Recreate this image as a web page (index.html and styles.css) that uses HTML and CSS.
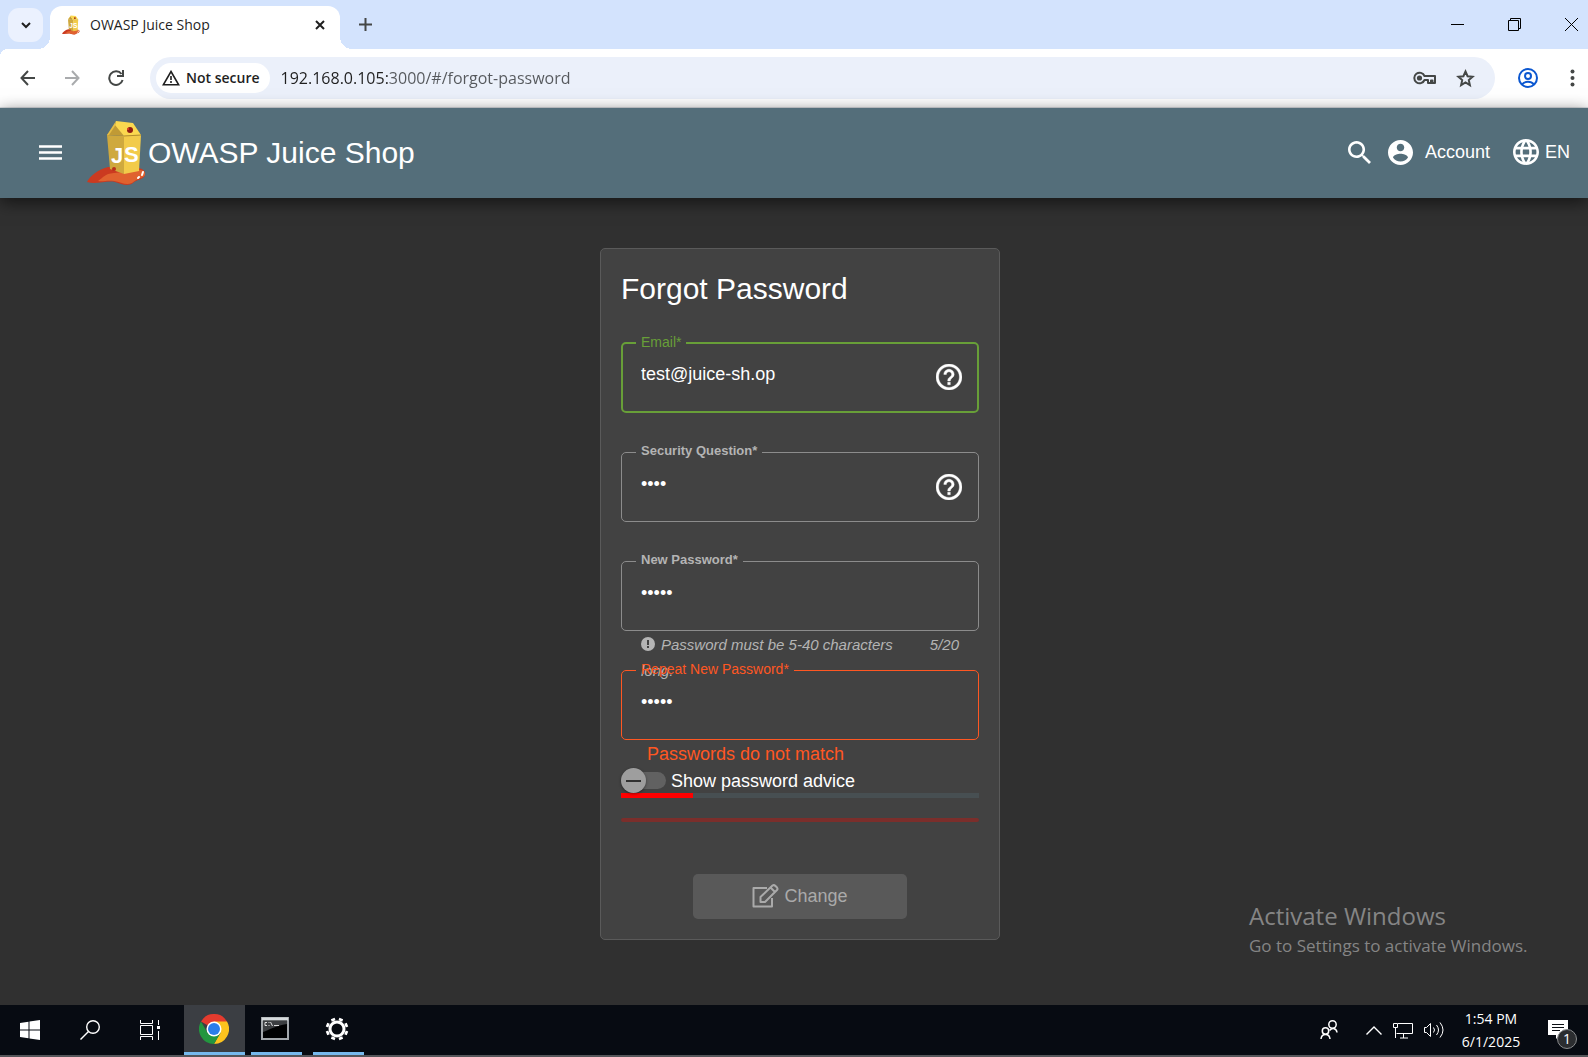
FILE: index.html
```html
<!DOCTYPE html>
<html lang="en">
<head>
<meta charset="utf-8">
<title>OWASP Juice Shop</title>
<link rel="stylesheet" href="styles.css">
</head>
<body>
<svg class="defs" width="0" height="0" aria-hidden="true">
  <symbol id="juice" viewBox="0 0 60 66">
    <path d="M0 62C3 56 10 50 21 47L50 48C57 48 60 53 57 57C54 60 49 60 46 63C41 67 34 64 28 62C20 60 9 65 0 62Z" fill="#cb3a20"/>
    <path d="M11 61C17 57 17 54 27 53L52 50C58 49 60 55 56 57C51 59 49 60 45 63C39 66 34 62 27 61C20 60 16 62 11 61Z" fill="#e0622f"/>
    <path d="M20 15L37 16L37 54L23 49Z" fill="#cfa93e"/>
    <path d="M37 16L54 15L52 51L37 54Z" fill="#f2cb4a"/>
    <path d="M20 15L29 4L37 16Z" fill="#c09a35"/>
    <path d="M29 1L46 3L54 15L37 16L28 5Z" fill="#fbd84f"/>
    <path d="M20 15L29 1L28 6L22 15Z" fill="#e5bd45"/>
    <path d="M37 16L54 15" stroke="#b58f2c" fill="none"/>
    <circle cx="43" cy="10" r="3" fill="#8f1d12"/><circle cx="41" cy="9" r="1" fill="#ef4428"/>
    <text class="logo-text" x="24" y="43">J</text>
    <text class="logo-text" x="37" y="42">S</text>
    <circle cx="27" cy="49" r="2" fill="#b9301c"/>
    <path d="M56 52L55 55M52 57L51 58" stroke="#fff" stroke-width="2" stroke-linecap="round"/>
  </symbol>
  <symbol id="help" viewBox="2 2 20 20">
    <path fill="currentColor" stroke="currentColor" stroke-width=".3" d="M11 18h2v-2h-2v2zm1-16C6.480 2 2 6.480 2 12s4.480 10 10 10 10-4.480 10-10S17.520 2 12 2zm0 18c-4.410 0-8-3.590-8-8s3.590-8 8-8 8 3.590 8 8-3.590 8-8 8zm0-14c-2.210 0-4 1.790-4 4h2c0-1.100.9-2 2-2s2 .9 2 2c0 2-3 1.750-3 5h2c0-2.250 3-2.500 3-5 0-2.210-1.790-4-4-4z"/>
  </symbol>
</svg>

<div class="tabstrip">
  <button class="tab-search" aria-label="Search tabs"><svg width="12" height="8" viewBox="0 0 12 8"><path d="M2 2l4 4 4-4" fill="none" stroke="#1f1f1f" stroke-width="2"/></svg></button>
  <div class="tab">
    <svg class="favicon" width="18" height="20"><use href="#juice"/></svg>
    <span class="tab-title">OWASP Juice Shop</span>
    <button class="icon-btn" aria-label="Close tab"><svg width="10" height="10" viewBox="0 0 10 10"><path d="M1 1l8 8M9 1l-8 8" stroke="#1f1f1f" stroke-width="2"/></svg></button>
  </div>
  <button class="icon-btn new-tab" aria-label="New tab"><svg width="13" height="13" viewBox="0 0 13 13"><path d="M6.500 0v13M0 6.500h13" stroke="#444746" stroke-width="2"/></svg></button>
  <div class="window-controls">
    <button class="icon-btn" aria-label="Minimize"><svg width="13" height="13" viewBox="0 0 13 13"><path d="M0 6.500h13" stroke="#000"/></svg></button>
    <button class="icon-btn" aria-label="Restore"><svg width="13" height="13" viewBox="0 0 13 13"><path d="M.5 2.500h10v10h-10zM2.500 2V.5h10v10H11" fill="none" stroke="#000"/></svg></button>
    <button class="icon-btn" aria-label="Close"><svg width="13" height="13" viewBox="0 0 13 13"><path d="M0 0l13 13M13 0L0 13" stroke="#000"/></svg></button>
  </div>
</div>

<div class="toolbar">
  <div class="nav">
    <button class="icon-btn" aria-label="Back"><svg width="16" height="16" viewBox="0 0 16 16"><path d="M15 8H2M8 1L1.500 8 8 15" fill="none" stroke="#444746" stroke-width="2"/></svg></button>
    <button class="icon-btn" aria-label="Forward"><svg width="16" height="16" viewBox="0 0 16 16"><path d="M1 8h13M8 1l6.500 7L8 15" fill="none" stroke="#a9abad" stroke-width="2"/></svg></button>
    <button class="icon-btn" aria-label="Reload"><svg width="16" height="16" viewBox="0 0 16 16"><path d="M13.500 4A6.800 6.800 0 1 0 14.600 10M15 0v6H9" fill="none" stroke="#444746" stroke-width="2"/></svg></button>
  </div>
  <div class="omnibox">
    <button class="chip"><svg width="18" height="16" viewBox="0 0 18 16"><path d="M9 1.500L16.700 14.800H1.300Z" fill="none" stroke="#1f1f1f" stroke-width="1.600"/><path d="M9 6v4M9 11v2" stroke="#1f1f1f" stroke-width="1.600"/></svg>Not secure</button>
    <input class="url" type="text" aria-label="Address" value="192.168.0.105:3000/#/forgot-password">
    <button class="icon-btn" aria-label="Passwords"><svg width="23" height="14" viewBox="0 0 23 14"><path d="M11.500 5A5.300 5.300 0 1 0 11.500 9H15v3h3V9.500h1.500V12H22V5Z" fill="none" stroke="#444746" stroke-width="2" stroke-linejoin="round"/><circle cx="6.500" cy="7" r="2.600" fill="#444746"/></svg></button>
    <button class="icon-btn" aria-label="Bookmark"><svg width="19" height="19" viewBox="0 0 19 19"><path d="M9.500 2.500l2.100 4.700 5 .5-3.800 3.400 1.100 5-4.400-2.600-4.400 2.600 1.100-5-3.800-3.400 5-.5z" fill="none" stroke="#444746" stroke-width="2"/></svg></button>
  </div>
  <button class="icon-btn profile" aria-label="Profile"><svg width="20" height="20" viewBox="0 0 20 20" fill="none" stroke="#0b57d0" stroke-width="2"><circle cx="10" cy="10" r="9"/><circle cx="10" cy="8" r="3"/><path d="M4 16.500c3-3.600 9-3.600 12 0"/></svg></button>
  <button class="icon-btn" aria-label="Menu"><svg width="5" height="18" viewBox="0 0 5 18" fill="#444746"><circle cx="2.500" cy="2.500" r="2"/><circle cx="2.500" cy="9" r="2"/><circle cx="2.500" cy="15.500" r="2"/></svg></button>
</div>

<header class="app-bar">
  <button class="icon-btn menu-btn" aria-label="Open sidenav"><svg width="24" height="15" viewBox="0 0 24 15"><path d="M0 1.500h23M0 7.500h23M0 13.500h23" stroke="#fff" stroke-width="2.600"/></svg></button>
  <a class="brand" href="#/"><svg width="60" height="66"><use href="#juice"/></svg><span>OWASP Juice Shop</span></a>
  <button class="icon-btn search-btn" aria-label="Search"><svg width="23" height="23" viewBox="3 3 17.500 17.500"><path fill="#fff" d="M15.500 14h-.79l-.28-.27C15.410 12.590 16 11.110 16 9.500 16 5.910 13.090 3 9.500 3S3 5.910 3 9.500 5.910 16 9.500 16c1.610 0 3.090-.59 4.230-1.570l.27.28v.79l5 4.990L20.490 19l-4.990-5zm-6 0C7.010 14 5 11.990 5 9.500S7.010 5 9.500 5 14 7.010 14 9.500 11.990 14 9.500 14z"/></svg></button>
  <button class="app-btn account"><svg width="25" height="25" viewBox="2 2 20 20"><path fill="#fff" d="M12 2C6.480 2 2 6.480 2 12s4.480 10 10 10 10-4.480 10-10S17.520 2 12 2zm0 3c1.660 0 3 1.340 3 3s-1.340 3-3 3-3-1.340-3-3 1.340-3 3-3zm0 14.200c-2.500 0-4.710-1.280-6-3.220.03-1.990 4-3.080 6-3.080 1.990 0 5.970 1.090 6 3.080-1.290 1.940-3.500 3.220-6 3.220z"/></svg>Account</button>
  <button class="app-btn lang"><svg width="26" height="26" viewBox="2 2 20 20"><path fill="#fff" d="M11.990 2C6.470 2 2 6.480 2 12s4.470 10 9.990 10C17.520 22 22 17.520 22 12S17.520 2 11.990 2zm6.930 6h-2.950c-.32-1.250-.78-2.450-1.380-3.560 1.840.63 3.370 1.910 4.330 3.560zM12 4.040c.83 1.200 1.480 2.530 1.910 3.960h-3.820c.43-1.430 1.080-2.760 1.910-3.960zM4.260 14C4.100 13.360 4 12.690 4 12s.1-1.360.26-2h3.380c-.08.66-.14 1.320-.14 2s.06 1.340.14 2H4.260zm.82 2h2.950c.32 1.250.78 2.450 1.380 3.560-1.840-.63-3.370-1.900-4.330-3.560zm2.950-8H5.080c.96-1.660 2.490-2.930 4.330-3.560C8.810 5.550 8.350 6.750 8.030 8zM12 19.960c-.83-1.200-1.480-2.530-1.910-3.960h3.820c-.43 1.430-1.080 2.760-1.910 3.960zM14.340 14H9.660c-.09-.66-.16-1.320-.16-2s.07-1.350.16-2h4.680c.09.65.16 1.320.16 2s-.07 1.340-.16 2zm.25 5.560c.6-1.110 1.060-2.310 1.380-3.560h2.950c-.96 1.650-2.490 2.930-4.330 3.560zM16.360 14c.08-.66.14-1.320.14-2s-.06-1.340-.14-2h3.380c.16.640.26 1.310.26 2s-.1 1.360-.26 2h-3.380z"/></svg>EN</button>
</header>

<main class="page">
  <form class="card">
    <h1>Forgot Password</h1>

    <div class="field">
      <fieldset class="outline focused">
        <legend><label for="email">Email*</label></legend>
        <input id="email" type="email" value="test@juice-sh.op">
        <svg class="help" width="26" height="26"><use href="#help"/></svg>
      </fieldset>
    </div>

    <div class="field">
      <fieldset class="outline">
        <legend><label for="answer">Security Question*</label></legend>
        <input id="answer" type="password" value="abcd">
        <svg class="help" width="26" height="26"><use href="#help"/></svg>
      </fieldset>
    </div>

    <div class="field">
      <fieldset class="outline">
        <legend><label for="new-password">New Password*</label></legend>
        <input id="new-password" type="password" value="abcde">
      </fieldset>
      <div class="subscript">
        <span class="hint"><svg width="14" height="14" viewBox="0 0 14 14"><circle cx="7" cy="7" r="7" fill="#b4b4b4"/><path d="M7 3v5M7 9v2" stroke="#424242" stroke-width="2"/></svg>Password must be 5-40 characters long.</span>
        <span>5/20</span>
      </div>
    </div>

    <div class="field last">
      <fieldset class="outline invalid">
        <legend><label for="repeat-password">Repeat New Password*</label></legend>
        <input id="repeat-password" type="password" value="abcdf">
      </fieldset>
      <div class="error">Passwords do not match</div>
    </div>

    <div class="toggle">
      <input id="advice" type="checkbox" role="switch">
      <label for="advice">Show password advice</label>
    </div>
    <progress class="strength" value="20" max="100" aria-label="Password strength"></progress>
    <div class="strength-line"></div>

    <button class="submit" type="submit" disabled><svg width="27" height="24" viewBox="0 0 27 24" fill="none" stroke="currentColor" stroke-width="2"><path d="M15 4H1.500v18.500H20V14" stroke-linejoin="round"/><path d="M8.500 18v-5L20.500 1.500Q22 .5 23.500 2L25 3.500Q26 5 25 6L13 18ZM18.500 3.500l4.500 4.500" stroke-linejoin="round"/></svg>Change</button>
  </form>

  <div class="watermark">
    <p class="watermark-title">Activate Windows</p>
    <p class="watermark-text">Go to Settings to activate Windows.</p>
  </div>
</main>

<footer class="taskbar">
  <div class="tasks">
    <button class="task" aria-label="Start"><svg width="20" height="20" viewBox="0 0 20 20" fill="#fff"><path d="M0 3l8.500-1.200V9.500H0zM9.500 1.600L20 0v9.500H9.500zM0 10.500h8.500v7.700L0 17zM9.500 10.500H20V20L9.500 18.400z"/></svg></button>
    <button class="task" aria-label="Search"><svg width="20" height="20" viewBox="0 0 20 20" fill="none" stroke="#fff" stroke-width="1.400"><circle cx="13" cy="7" r="6.300"/><path d="M8.500 11.500L.5 19.500"/></svg></button>
    <button class="task" aria-label="Task view"><svg width="20" height="20" viewBox="0 0 20 20" fill="none" stroke="#fff"><path d="M.5 0v3.500h12V0M.5 20v-3.500h12V20M.5 5.500h12v9H.5zM18.500 0v5M18.500 11v9"/><path d="M17 6h3v3h-3z" fill="#fff" stroke="none"/></svg></button>
    <button class="task active" aria-label="Chrome"><svg width="30" height="30" viewBox="0 0 30 30"><path d="M15 15L2 7.500A15 15 0 0 1 28 7.500Z" fill="#e33b2e"/><path d="M15 15L15 7.500H28A15 15 0 0 1 15 30L21.500 18.700Z" fill="#fcc31e"/><path d="M15 15L21.500 18.700L15 30A15 15 0 0 1 2 7.500L8.500 18.700Z" fill="#23963f"/><circle cx="15" cy="15" r="7.500" fill="#fff"/><circle cx="15" cy="15" r="6" fill="#2b7de9"/></svg></button>
    <button class="task running" aria-label="Command Prompt"><svg width="28" height="23" viewBox="0 0 28 23"><path d="M1 1h26v21H1z" fill="#000" stroke="#a3a7aa" stroke-width="2"/><path d="M2 4h24v3C14 9 8 13 2 15z" fill="#3c3e40"/><path d="M1 2h26" stroke="#d5dadd" stroke-width="3"/><path d="M6 5.500H4v3h2M8 5v1M8 8v1M9.500 5l2 4M13 8.500h5" fill="none" stroke="#ddd"/></svg></button>
    <button class="task running" aria-label="Settings"><svg width="24" height="24" viewBox="0 0 24 24" fill="none" stroke="#fff"><circle cx="12" cy="12" r="7" stroke-width="3"/><path stroke-width="4" d="M8.700 4L7.700 1.500M15.300 4l1-2.500M20 8.700l2.500-1M20 15.300l2.500 1M15.300 20l1 2.500M8.700 20l-1 2.500M4 15.300l-2.500 1M4 8.700L1.500 7.700"/></svg></button>
  </div>
  <div class="tray">
    <button class="icon-btn people" aria-label="People"><svg width="18" height="20" viewBox="0 0 18 20" fill="none" stroke="#fff" stroke-width="1.500"><circle cx="12.500" cy="4.500" r="3.700"/><circle cx="5.500" cy="11" r="3.200"/><path d="M1 19c.5-6 8.500-6 9 0M9.500 10.500c3-3.500 7-2 7.500 2"/></svg></button>
    <button class="icon-btn" aria-label="Show hidden icons"><svg width="16" height="9" viewBox="0 0 16 9"><path d="M.5 8.500L8 1l7.500 7.500" fill="none" stroke="#fff" stroke-width="1.400"/></svg></button>
    <button class="icon-btn" aria-label="Network"><svg width="20" height="17" viewBox="0 0 20 17" fill="none" stroke="#fff"><path d="M5 1.500h14.500v10H3.500M10.500 12v4M7 16h8M.5 1.500h4v4h-4zM2.500 6v10"/></svg></button>
    <button class="icon-btn" aria-label="Volume"><svg width="20" height="18" viewBox="0 0 20 18" fill="none" stroke="#fff"><path d="M.5 6.500h2l4-4v13l-4-4h-2zM9.500 6.500q2 2.500 0 5M12.500 4q4 5 0 10M16 1.500q6 7.500 0 15"/></svg></button>
    <div class="clock"><span>1:54 PM</span><span>6/1/2025</span></div>
    <button class="icon-btn notify" aria-label="Notifications"><svg width="20" height="20" viewBox="0 0 20 20"><path d="M0 0h20v15H12l-4 4v-4H0z" fill="#fff"/><path d="M4 4.500h12M4 7.500h12M4 10.500h8" stroke="#0b0f14"/></svg><span class="badge">1</span></button>
  </div>
</footer>
</body>
</html>
```
FILE: styles.css
```css
* { box-sizing: border-box; }

body {
  margin: 0;
  min-height: 100vh;
  display: flex;
  flex-direction: column;
  background: #303030;
  color: #fff;
  font: 18px/26px "Liberation Sans", Arial, sans-serif;
}

button, input { font: inherit; color: inherit; }
button { border: 0; background: none; padding: 0; }
svg { display: block; flex: none; }
.defs { position: absolute; }
.icon-btn { display: flex; align-items: center; justify-content: center; flex: none; }
.logo-text { font: bold 22px "Liberation Sans Narrow", "Liberation Sans", sans-serif; fill: #fff; }

/* Browser window */
.tabstrip {
  display: flex;
  align-items: center;
  height: 49px;
  padding: 0 10px 0 8px;
  background: #d3e3fd;
  color: #1f1f1f;
  font: 14px/20px "Open Sans", sans-serif;
}
.tab-search {
  display: grid;
  place-items: center;
  width: 35px;
  height: 34px;
  margin-right: 7px;
  border-radius: 11px;
  background: #ebf1fe;
}
.tab {
  position: relative;
  align-self: flex-end;
  display: flex;
  align-items: center;
  gap: 10px;
  width: 290px;
  height: 43px;
  padding: 0 15px 6px 12px;
  border-radius: 12px 12px 0 0;
  background: #fff;
}
.tab::before, .tab::after {
  content: "";
  position: absolute;
  bottom: 0;
  width: 12px;
  height: 12px;
}
.tab::before { right: 100%; background: radial-gradient(circle at 0 0, transparent 12px, #fff 12px); }
.tab::after { left: 100%; background: radial-gradient(circle at 100% 0, transparent 12px, #fff 12px); }
.tab-title { flex: 1; white-space: nowrap; }
.new-tab { margin-left: 19px; }
.window-controls { display: flex; gap: 44px; margin-left: auto; }

.toolbar {
  display: flex;
  align-items: center;
  height: 59px;
  padding: 0 13px 0 20px;
  border-bottom: 1px solid #dcdfe3;
  background: radial-gradient(circle at 8px 8px, #fff 8px, #d3e3fd 8px) 0 0 / 8px 8px no-repeat #fff;
  color: #1f1f1f;
}
.nav { display: flex; gap: 28px; margin-right: 26px; }
.omnibox {
  flex: 1;
  display: flex;
  align-items: center;
  gap: 20px;
  height: 42px;
  padding: 0 20px 0 6px;
  border-radius: 21px;
  background: #ebf0fa;
}
.chip {
  display: flex;
  align-items: center;
  gap: 6px;
  height: 30px;
  padding: 0 10px 0 6px;
  margin-right: -9px;
  border-radius: 15px;
  background: #fff;
  font: 600 14px/20px "Open Sans", sans-serif;
  white-space: nowrap;
}
.url {
  flex: 1;
  min-width: 0;
  padding: 0;
  border: 0;
  outline: 0;
  background: linear-gradient(to right, #1f1f1f 107px, #55585c 107px);
  background-clip: text;
  color: transparent;
  font: 16px/24px "Open Sans", sans-serif;
}
.profile { margin: 0 32px 0 23px; }

/* Application bar */
.app-bar {
  position: relative;
  z-index: 1;
  display: flex;
  align-items: center;
  height: 90px;
  padding: 0 18px 2px 39px;
  background: #546e7a;
  box-shadow: 0 4px 16px rgba(0, 0, 0, .6);
}
.menu-btn { margin-right: 24px; }
.brand {
  display: flex;
  align-items: center;
  gap: 1px;
  margin-top: 2px;
  color: #fff;
  font-size: 30px;
  line-height: 40px;
  text-decoration: none;
}
.search-btn { margin-left: auto; }
.app-btn { display: flex; align-items: center; }
.account { gap: 12px; margin: 0 23px 0 17px; }
.lang { gap: 6px; }

/* Forgot password card */
.page {
  position: relative;
  flex: 1;
  display: flex;
  justify-content: center;
  align-items: flex-start;
  padding: 50px 0 65px 12px;
}
.card {
  width: 400px;
  padding: 20px;
  border: 1px solid #5a5a5a;
  border-radius: 5px;
  background: #424242;
}
h1 { margin: 0 0 26px; font-size: 30px; line-height: 40px; font-weight: 400; }
.field { height: 109px; }
.field.last { height: 106px; }
.outline {
  display: flex;
  align-items: flex-start;
  height: 78px;
  margin: 0;
  padding: 10px 16px 0 19px;
  border: 1px solid #8c8c8c;
  border-radius: 5px;
}
.outline legend {
  height: 16px;
  margin-left: -5px;
  padding: 0 5px;
  color: #b4b4b4;
  font-size: 13px;
  font-weight: 700;
  line-height: 14px;
}
.outline label { display: block; }
.outline input {
  flex: 1;
  min-width: 0;
  height: 28px;
  padding: 0;
  border: 0;
  outline: 0;
  background: none;
}
.outline .help { margin-top: 4px; }
.outline.focused { padding: 9px 15px 0 18px; border: 2px solid #689f38; }
.focused legend { color: #689f38; font-size: 14px; font-weight: 400; }
.outline.invalid { border-color: #ff5722; }
.invalid legend { color: #ff5722; font-size: 14px; font-weight: 400; }
.subscript {
  display: flex;
  justify-content: space-between;
  height: 31px;
  padding: 0 20px;
  color: #b4b4b4;
  font-size: 15px;
  font-style: italic;
}
.subscript > * { margin-top: 1px; }
.hint { width: 264px; }
.hint svg { display: inline-block; margin-right: 6px; vertical-align: -1px; }
.error { padding: 1px 26px 0; color: #ff5722; }
.toggle { display: flex; align-items: center; gap: 5px; height: 25px; }
.toggle input {
  appearance: none;
  flex: none;
  display: grid;
  align-items: center;
  width: 45px;
  height: 25px;
  margin: 0;
}
.toggle input::before, .toggle input::after { content: ""; grid-area: 1 / 1; }
.toggle input::before { height: 17px; margin-left: 6px; border-radius: 9px; background: #616161; }
.toggle input::after {
  width: 25px;
  height: 25px;
  border-radius: 50%;
  background: linear-gradient(#303030, #303030) center / 15px 2px no-repeat #9e9e9e;
  box-shadow: 0 1px 3px rgba(0, 0, 0, .4);
}
.strength {
  appearance: none;
  display: block;
  width: 100%;
  height: 5px;
  border: 0;
  background: #474f52;
}
.strength::-webkit-progress-bar { background: #474f52; }
.strength::-webkit-progress-value { background: #f00; }
.strength-line { height: 4px; margin: 20px 0 52px; border-radius: 2px; background: #7b2e2b; }
.submit {
  display: flex;
  align-items: center;
  justify-content: center;
  gap: 5px;
  width: 214px;
  height: 45px;
  margin: 0 auto;
  padding-bottom: 2px;
  border-radius: 5px;
  background: #595959;
  color: #aaa;
}

.watermark {
  position: absolute;
  right: 0;
  bottom: 46px;
  width: 339px;
  color: #858585;
  font-family: "Open Sans", sans-serif;
}
.watermark p { margin: 0; white-space: nowrap; }
.watermark-title { font-size: 24px; line-height: 34px; }
.watermark-text { font-size: 17px; line-height: 26px; }

/* Desktop taskbar */
.taskbar {
  display: flex;
  justify-content: space-between;
  height: 52px;
  border-bottom: 2px solid #55565a;
  background: #070b12;
  font: 14px/23px "Open Sans", sans-serif;
}
.tasks { display: flex; }
.task { display: grid; place-items: center; width: 60px; height: 50px; }
.task.active { width: 61px; margin: 0 6px 0 4px; padding-right: 2px; border-bottom: 3px solid #76b9ed; background: #3b3e43; }
.task.running { width: 51px; margin-right: 11px; padding-right: 3px; border-bottom: 3px solid #76b9ed; }
.tray { display: flex; align-items: center; padding-right: 20px; }
.tray .icon-btn { margin-right: 10px; }
.tray .people { margin-right: 28px; }
.tray .icon-btn + .icon-btn { margin-right: 11px; }
.clock { display: flex; flex-direction: column; width: 72px; margin-right: 21px; text-align: center; }
.tray .notify { position: relative; margin-right: 0; }
.badge {
  position: absolute;
  left: 9px;
  top: 9px;
  width: 20px;
  height: 20px;
  border: 1px solid #8a8c8e;
  border-radius: 50%;
  background: #2b2d30;
  line-height: 18px;
  text-align: center;
}
```
